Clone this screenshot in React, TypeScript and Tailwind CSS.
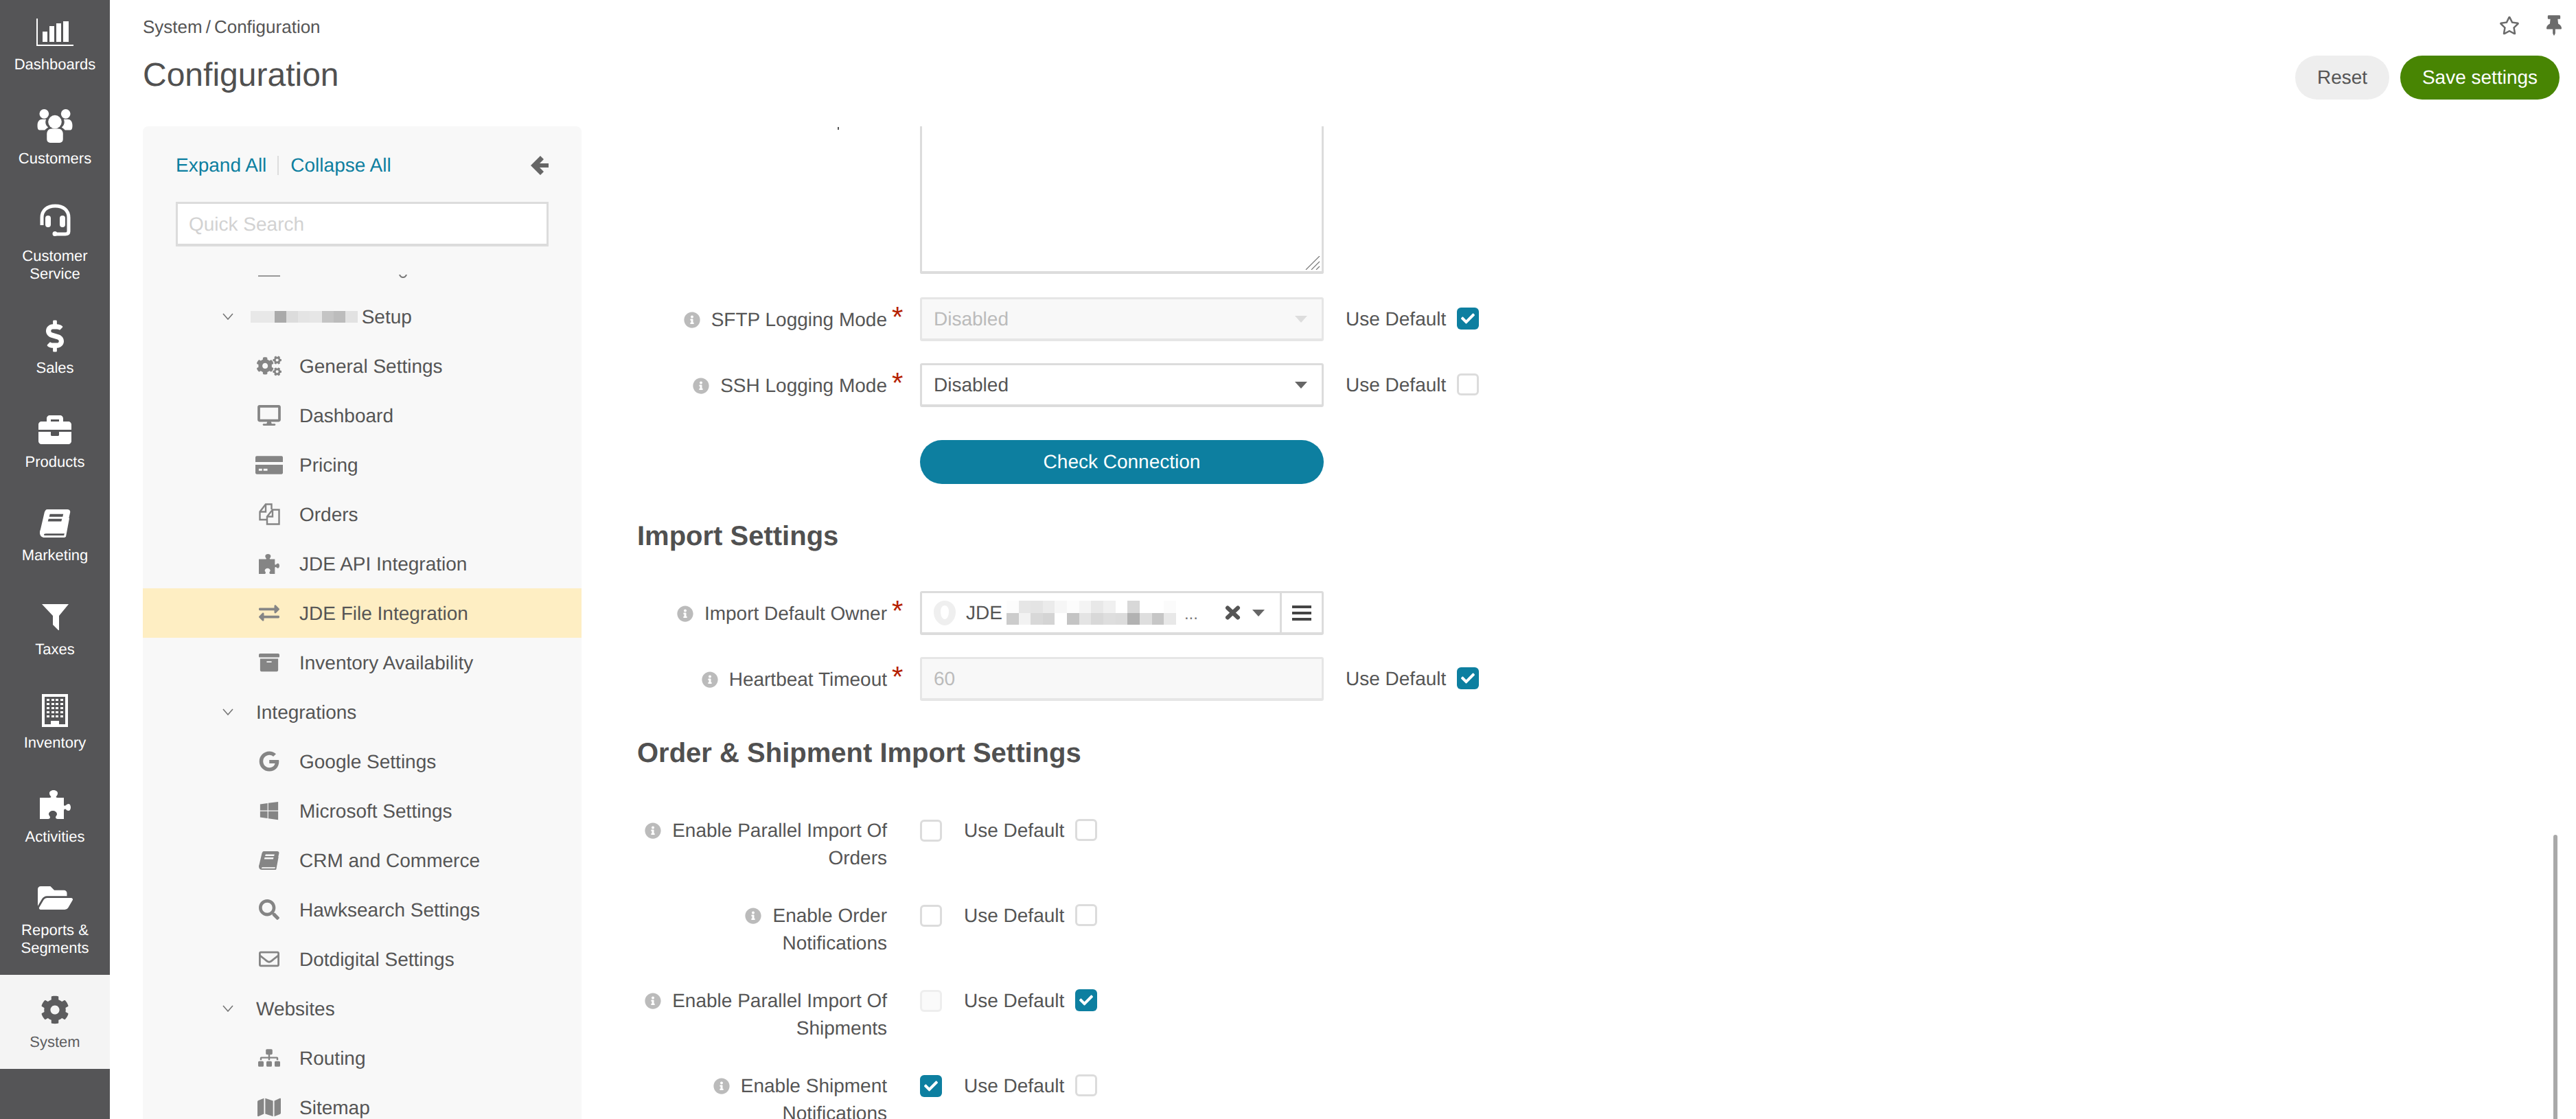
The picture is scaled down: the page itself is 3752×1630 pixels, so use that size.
import type { ReactNode } from "react";
import {
  FaArchive,
  FaBriefcase,
  FaCheck,
  FaCog,
  FaCogs,
  FaDesktop,
  FaDollarSign,
  FaExchangeAlt,
  FaFolderOpen,
  FaGoogle,
  FaInfoCircle,
  FaMap,
  FaRegEnvelope,
  FaRegStar,
  FaSearch,
  FaSitemap,
  FaThumbtack,
  FaWindows,
} from "react-icons/fa";

const font = "font-['Liberation_Sans',Arial,sans-serif] [text-rendering:geometricPrecision]";

function ChartIcon() {
  return (
    <svg viewBox="0 0 54 40" className="h-[40px] w-[54px]" fill="currentColor">
      <path d="M0 0h2v38h52v2H0z" />
      <rect x="9" y="19" width="7" height="15" />
      <rect x="19" y="11" width="7" height="23" />
      <rect x="29" y="7" width="7" height="27" />
      <rect x="39" y="4" width="8" height="30" />
    </svg>
  );
}

function UsersIcon() {
  return (
    <svg viewBox="0 0 52 50" className="h-[49px] w-[52px]" fill="currentColor">
      <circle cx="10" cy="7" r="7" />
      <circle cx="42" cy="7" r="7" />
      <path d="M0 24c0-6 3-9 7-9h6c-2 4-1 9 3 12-2 1-4 3-5 4H3c-2 0-3-2-3-7zM52 24c0-6-3-9-7-9h-6c2 4 1 9-3 12 2 1 4 3 5 4h8c2 0 3-2 3-7z" />
      <circle cx="26" cy="19" r="10" />
      <path d="M14 37c0-5 3-8 7-8h10c4 0 7 3 7 8v8c0 3-2 5-5 5H19c-3 0-5-2-5-5z" />
    </svg>
  );
}

function HeadsetIcon() {
  return (
    <svg viewBox="0 0 49 47" className="h-[47px] w-[49px]" fill="none" stroke="currentColor">
      <path d="M5 31V20C5 9 13 3 24.5 3S44 9 44 20v20c0 3-2 4-5 4H26" strokeWidth="5" />
      <rect x="10" y="17" width="8" height="17" rx="4" fill="currentColor" strokeWidth="0" />
      <rect x="31" y="17" width="8" height="17" rx="4" fill="currentColor" strokeWidth="0" />
      <circle cx="24" cy="43.5" r="3.5" fill="currentColor" strokeWidth="0" />
    </svg>
  );
}

function BookIcon({ className, cut }: { className: string; cut: string }) {
  return (
    <svg viewBox="0 0 46 42" preserveAspectRatio="none" className={className} fill="currentColor">
      <path d="M11 0h30c3 0 5 2 4 5l-6 28c-1 2-2 3-4 3H9c-2 0-3 1-3 2s1 1 3 1h27l5-27 3 1-5 27c0 1-1 2-3 2H7c-4 0-7-3-7-7 0-1 0-3 1-5L7 4c1-2 2-4 4-4z" />
      <path d="M15 7h20l-1 4H14zM13 14h20l-1 4H12z" style={{ fill: cut }} />
    </svg>
  );
}

function PuzzleIcon({ className }: { className: string }) {
  return (
    <svg viewBox="0 0 45 42" preserveAspectRatio="none" className={className} fill="currentColor">
      <path d="M0 42V11h14c2 0 3-1 2-2-2-2-2-4-2-5 0-2 3-4 6-4s6 2 6 4c0 1 0 3-2 5-1 1 0 2 2 2h9v10c0 2 1 2 3 1 1-1 2-2 4-2s3 3 3 5-1 5-3 5-3-1-4-2c-2-1-3 0-3 2v12H26c-2 0-3-1-3-3 1-2 2-3 2-4 0-3-3-5-6-5s-6 2-6 5c0 1 1 2 2 4 0 2-1 3-3 3z" />
    </svg>
  );
}

function FilterIcon() {
  return (
    <svg viewBox="0 0 39 38" className="h-[38px] w-[39px]" fill="currentColor">
      <path d="M0 0h39L25 17v21l-1 0-8-8V17z" />
    </svg>
  );
}

function BuildingIcon() {
  const dots = Array.from({ length: 20 });
  return (
    <div className="flex h-[48px] w-[38px] flex-col border-[4px] border-white px-[3px] pt-[3px]">
      <div className="grid grid-cols-4 gap-x-[2px] gap-y-[3px]">
        {dots.map((_, i) => (
          <span key={i} className="h-[3px] w-[4px] bg-white" />
        ))}
      </div>
      <div className="mt-auto flex justify-center">
        <span className="h-[5px] w-[12px] bg-white" />
      </div>
    </div>
  );
}

function CardIcon() {
  return (
    <svg viewBox="0 0 41 27" className="h-[27px] w-[41px]" fill="currentColor">
      <path d="M2 0h37c1 0 2 1 2 2v7H0V2c0-1 1-2 2-2z" />
      <path d="M0 13h41v12c0 1-1 2-2 2H2c-1 0-2-1-2-2zM5 19v3h5v-3zm7 0v3h6v-3z" fillRule="evenodd" />
    </svg>
  );
}

function FilesIcon() {
  return (
    <svg viewBox="0 0 31 32" className="h-[32px] w-[31px]" fill="none" stroke="currentColor" strokeWidth="2.4">
      <path d="M11 24H1.5V12.5L10 1.5h8.5V9" />
      <path d="M1.5 12.5H10v-11" />
      <path d="M12 19.5L20 9.500h9.500v21H12z" />
      <path d="M12 19.500h8v-10" />
    </svg>
  );
}

type NavItem = { label: ReactNode; icon: ReactNode; cls: string; gap?: string; active?: boolean };

const navItems: NavItem[] = [
  { label: "Dashboards", icon: <ChartIcon />, cls: "h-[132.5px] pt-[22px]" },
  { label: "Customers", icon: <UsersIcon />, cls: "h-[136.5px] pt-[26px]" },
  { label: <>Customer<br />Service</>, icon: <HeadsetIcon />, cls: "h-[169px] pt-[26px]", gap: "mb-[15px]" },
  { label: "Sales", icon: <FaDollarSign className="h-[47px] w-[26px]" />, cls: "h-[136.5px] pt-[26px]" },
  { label: "Products", icon: <FaBriefcase className="h-[48px] w-[48px]" />, cls: "h-[136.5px] pt-[26px]" },
  { label: "Marketing", icon: <BookIcon className="h-[41px] w-[45px]" cut="#555557" />, cls: "h-[136.5px] pt-[26px]" },
  { label: "Taxes", icon: <FilterIcon />, cls: "h-[136.5px] pt-[26px]" },
  { label: "Inventory", icon: <BuildingIcon />, cls: "h-[136.5px] pt-[26px]" },
  { label: "Activities", icon: <PuzzleIcon className="h-[42px] w-[45px]" />, cls: "h-[136.5px] pt-[26px]" },
  { label: <>Reports &amp;<br />Segments</>, icon: <FaFolderOpen className="h-[46px] w-[51px]" />, cls: "h-[163px] pt-[26px]" },
  { label: "System", icon: <FaCog className="h-[42px] w-[42px]" />, cls: "h-[137px] pt-[26px]", active: true },
];

function Sidebar() {
  return (
    <nav className="h-full w-[160px] shrink-0 bg-[#555557] text-white">
      {navItems.map((item, i) => (
        <div
          key={i}
          className={`flex flex-col items-center text-center text-[22px] leading-[26px] ${item.cls} ${
            item.active ? "bg-[#f4f4f4] text-[#5c5c5e]" : ""
          }`}
        >
          <div className={`flex h-[50px] items-center justify-center ${item.gap ?? "mb-[9px]"}`}>{item.icon}</div>
          <div>{item.label}</div>
        </div>
      ))}
    </nav>
  );
}

const iconCls = "h-[30px] w-[32px]";

type TreeRow =
  | { kind: "group"; label: string }
  | { kind: "item"; label: string; icon: ReactNode; active?: boolean };

const treeRows: TreeRow[] = [
  { kind: "item", label: "General Settings", icon: <FaCogs className="h-[32px] w-[36px]" /> },
  { kind: "item", label: "Dashboard", icon: <FaDesktop className="h-[30px] w-[34px]" /> },
  { kind: "item", label: "Pricing", icon: <CardIcon /> },
  { kind: "item", label: "Orders", icon: <FilesIcon /> },
  { kind: "item", label: "JDE API Integration", icon: <PuzzleIcon className="h-[29px] w-[30px]" /> },
  { kind: "item", label: "JDE File Integration", icon: <FaExchangeAlt className={iconCls} />, active: true },
  { kind: "item", label: "Inventory Availability", icon: <FaArchive className={iconCls} /> },
  { kind: "group", label: "Integrations" },
  { kind: "item", label: "Google Settings", icon: <FaGoogle className={iconCls} /> },
  { kind: "item", label: "Microsoft Settings", icon: <FaWindows className={iconCls} /> },
  { kind: "item", label: "CRM and Commerce", icon: <BookIcon className="h-[27px] w-[30px]" cut="#f8f8f8" /> },
  { kind: "item", label: "Hawksearch Settings", icon: <FaSearch className={iconCls} /> },
  { kind: "item", label: "Dotdigital Settings", icon: <FaRegEnvelope className="h-[30px] w-[34px]" /> },
  { kind: "group", label: "Websites" },
  { kind: "item", label: "Routing", icon: <FaSitemap className={iconCls} /> },
  { kind: "item", label: "Sitemap", icon: <FaMap className="h-[32px] w-[34px]" /> },
];

function Chevron() {
  return (
    <svg viewBox="0 0 16 10" className="h-[10px] w-[16px]" fill="none" stroke="#777" strokeWidth="1.6">
      <path d="M1 1l7 8 7-8" />
    </svg>
  );
}

function Blocks({ colors, size, rowH }: { colors: string[][]; size: number; rowH: number }) {
  return (
    <div className="flex flex-col">
      {colors.map((row, r) => (
        <div key={r} className="flex">
          {row.map((c, i) => (
            <span key={i} style={{ width: size, height: rowH, backgroundColor: c }} />
          ))}
        </div>
      ))}
    </div>
  );
}

function Tree() {
  return (
    <div className="mt-[38px] min-h-0 flex-1 overflow-hidden">
      <div className="relative h-[28px]">
        <span className="absolute left-[168px] top-[4px] h-[2px] w-[32px] bg-[#999]" />
        <svg viewBox="0 0 12 5" className="absolute left-[373px] top-[3px] h-[5px] w-[12px]" fill="none" stroke="#777" strokeWidth="2">
          <path d="M1 0c1 3 3 4 5 4s4-1 5-4" />
        </svg>
      </div>
      <div className="flex h-[72px] items-center pl-[116px] text-[#555]">
        <span className="w-[41px]">
          <Chevron />
        </span>
        <Blocks
          size={17.3}
          rowH={17}
          colors={[["#e8e8e8", "#e8e8e8", "#aaaaaa", "#dcdcdc", "#e4e4e4", "#e6e6e6", "#c4c4c4", "#bcbcbc", "#e2e2e2"]]}
        />
        <span className="ml-[6px] mt-[1px]">Setup</span>
      </div>
      {treeRows.map((row) =>
        row.kind === "group" ? (
          <div key={row.label} className="flex h-[72px] items-center pl-[116px] text-[#555]">
            <span className="w-[49px]">
              <Chevron />
            </span>
            <span className="mt-[1px]">{row.label}</span>
          </div>
        ) : (
          <div
            key={row.label}
            className={`flex h-[72px] items-center pl-[164px] text-[#555] ${row.active ? "bg-[#feeec3]" : ""}`}
          >
            <span className="flex w-[64px] justify-center pr-[24px] text-[#858585]">{row.icon}</span>
            <span className="mt-[1px]">{row.label}</span>
          </div>
        ),
      )}
    </div>
  );
}

function LeftPanel() {
  return (
    <aside className="ml-[48px] flex w-[639px] shrink-0 flex-col rounded-t-[8px] bg-[#f8f8f8] text-[28px]">
      <div className="flex items-center justify-between pl-[48px] pr-[48px] pt-[36px]">
        <div className="flex items-center text-[#0d7fa0]">
          <span>Expand All</span>
          <span className="ml-[16px] mr-[17px] h-[28px] w-[2px] bg-[#ddd]" />
          <span>Collapse All</span>
        </div>
        <svg viewBox="0 0 26 28" className="h-[28px] w-[26px]" fill="#666">
          <path d="M14 0L0 14l14 14 5-5-6-6h13v-6H13l6-6z" />
        </svg>
      </div>
      <div className="mx-[48px] mt-[32px] flex h-[65px] items-center border-[3px] border-b-[4px] border-[#dcdcdc] bg-white px-[16px] pt-[2px] text-[#d2d2d2]">
        Quick Search
      </div>
      <Tree />
    </aside>
  );
}

function Label({ text, required }: { text: string; required?: boolean }) {
  return (
    <div className="flex w-[412px] shrink-0">
      <div className={`w-[364px] text-right leading-[40px] text-[#555] ${required ? "mt-[1px]" : ""}`}>
        <FaInfoCircle className="mr-[16px] inline-block h-[24px] w-[24px] align-[-3px] text-[#bbb]" />
        {text}
      </div>
      {required && <span className="ml-[7px] mt-[-6px] h-0 text-[42px] leading-[46px] text-[#b51f00]">*</span>}
    </div>
  );
}

function Box({ checked, disabled }: { checked?: boolean; disabled?: boolean }) {
  if (checked) {
    return (
      <span className="flex h-[32px] w-[32px] shrink-0 items-center justify-center rounded-[6px] bg-[#0d7fa0] text-white">
        <FaCheck className="h-[20px] w-[22px]" />
      </span>
    );
  }
  return (
    <span
      className={`block h-[32px] w-[32px] shrink-0 rounded-[6px] border-[3px] ${
        disabled ? "border-[#eee] bg-[#fafafa]" : "border-[#dcdcdc] bg-white"
      }`}
    />
  );
}

function UseDefault({ checked }: { checked?: boolean }) {
  return (
    <div className="flex h-[32px] items-center">
      <span className="text-[#555]">Use Default</span>
      <span className="ml-[16px] mt-[-2px] block">
        <Box checked={checked} />
      </span>
    </div>
  );
}

function Caret({ color }: { color: string }) {
  return (
    <svg viewBox="0 0 18 10" className="h-[10px] w-[18px]" style={{ fill: color }}>
      <path d="M0 0h18L9 10z" />
    </svg>
  );
}

function FieldRow({
  label,
  children,
  useDefault,
}: {
  label: string;
  children: ReactNode;
  useDefault: boolean;
}) {
  return (
    <div className="flex h-[64px] items-center">
      <Label text={label} required />
      {children}
      <div className="ml-[32px]">
        <UseDefault checked={useDefault} />
      </div>
    </div>
  );
}

function CheckRow({
  label,
  checked,
  disabled,
  useDefault,
}: {
  label: string;
  checked?: boolean;
  disabled?: boolean;
  useDefault?: boolean;
}) {
  return (
    <div className="mb-[44px] flex h-[80px] shrink-0 items-start">
      <div className="mt-[-4px]">
        <Label text={label} />
      </div>
      <div className="flex items-center">
        <Box checked={checked} disabled={disabled} />
        <span className="ml-[32px] block">
          <UseDefault checked={useDefault} />
        </span>
      </div>
    </div>
  );
}

function Form() {
  return (
    <div className="relative ml-[81px] min-w-0 flex-1 overflow-hidden text-[28px]">
      <span className="absolute left-[292px] top-[1px] h-[4px] w-[2px] bg-[#555]" />
      <div className="ml-[412px] flex h-[215px] w-[588px] items-end justify-end rounded-b-[3px] border-x-[3px] border-b-[4px] border-[#dcdcdc] pb-[2px] pr-[2px]">
        <svg viewBox="0 0 22 20" className="h-[20px] w-[22px]" stroke="#777" strokeWidth="1.2">
          <path d="M1 20L21 0M9 20L21 8M16 20l5-5" />
        </svg>
      </div>

      <div className="mt-[34px]">
        <FieldRow label="SFTP Logging Mode" useDefault>
          <div className="flex h-[64px] w-[588px] items-center justify-between rounded-[3px] border-[3px] border-b-[4px] border-[#e6e6e6] bg-[#f8f8f8] pl-[17px] pr-[21px] text-[#bbb]">
            <span className="mt-[1px]">Disabled</span>
            <Caret color="#ddd" />
          </div>
        </FieldRow>
      </div>
      <div className="mt-[32px]">
        <FieldRow label="SSH Logging Mode" useDefault={false}>
          <div className="flex h-[64px] w-[588px] items-center justify-between rounded-[3px] border-[3px] border-b-[4px] border-[#dcdcdc] bg-white pl-[17px] pr-[21px] text-[#555]">
            <span className="mt-[1px]">Disabled</span>
            <Caret color="#666" />
          </div>
        </FieldRow>
      </div>
      <div className="ml-[412px] mt-[48px] flex h-[64px] w-[588px] items-center justify-center rounded-full bg-[#0d7fa0] text-white">
        Check Connection
      </div>

      <h2 className="mt-[52px] text-[40px] font-bold leading-[48px] text-[#505050]">Import Settings</h2>
      <div className="mt-[56px] flex h-[64px] items-center">
        <Label text="Import Default Owner" required />
        <div className="flex h-[64px] w-[588px] items-stretch rounded-[3px] border-[3px] border-b-[4px] border-[#dcdcdc] bg-white text-[#555]">
          <div className="flex min-w-0 flex-1 items-center pl-[17px]">
            <svg viewBox="0 0 32 36" className="h-[36px] w-[32px]" fill="#efefef">
              <path d="M16 0c9 0 16 7 16 16 0 8-3 13-8 17-2 2-5 3-8 3s-6-1-8-3C3 29 0 24 0 16 0 7 7 0 16 0zm0 7c-4 0-6 4-6 9s2 11 6 11 6-6 6-11-2-9-6-9z" />
            </svg>
            <span className="ml-[15px]">JDE</span>
            <span className="ml-[6px]">
              <Blocks
                size={17.65}
                rowH={17.5}
                colors={[
                  ["#fcfcfc", "#e6e6e6", "#e4e4e4", "#ebebeb", "#f6f6f6", "#fcfcfc", "#f4f4f4", "#e8e8e8", "#f0f0f0", "#ffffff", "#d8d8d8", "#ffffff", "#ffffff", "#fbfbfb"],
                  ["#cccccc", "#f2f2f2", "#d8d8d8", "#d4d4d4", "#ffffff", "#c4c4c4", "#e4e4e4", "#d8d8d8", "#dedede", "#dcdcdc", "#b2b2b2", "#dedede", "#c6c6c6", "#e8e8e8"],
                ]}
              />
            </span>
            <span className="ml-[12px] mt-[4px] text-[24px] text-[#777]">...</span>
            <svg viewBox="0 0 23 21" className="ml-[39px] h-[21px] w-[23px]" stroke="#555" strokeWidth="6" strokeLinecap="round">
              <path d="M4 3.5l15 14M19 3.5l-15 14" />
            </svg>
            <span className="ml-[17px]">
              <Caret color="#666" />
            </span>
          </div>
          <div className="flex w-[61px] shrink-0 items-center justify-center border-l-[3px] border-[#dcdcdc]">
            <div className="flex w-[28px] flex-col gap-[5px]">
              <span className="h-[4px] bg-[#444]" />
              <span className="h-[4px] bg-[#444]" />
              <span className="h-[4px] bg-[#444]" />
            </div>
          </div>
        </div>
      </div>
      <div className="mt-[32px]">
        <FieldRow label="Heartbeat Timeout" useDefault>
          <div className="flex h-[64px] w-[588px] items-center rounded-[3px] border-[3px] border-b-[4px] border-[#e6e6e6] bg-[#f8f8f8] pl-[17px] text-[#bbb]">
            <span className="mt-[1px]">60</span>
          </div>
        </FieldRow>
      </div>

      <h2 className="mt-[52px] mb-[-1px] text-[40px] font-bold leading-[48px] text-[#505050]">
        Order &amp; Shipment Import Settings
      </h2>
      <div className="mt-[74px]">
        <CheckRow label="Enable Parallel Import Of Orders" />
        <CheckRow label="Enable Order Notifications" />
        <CheckRow label="Enable Parallel Import Of Shipments" disabled useDefault />
        <CheckRow label="Enable Shipment Notifications" checked />
      </div>
    </div>
  );
}

export default function App() {
  return (
    <div className={`relative flex h-screen w-full overflow-hidden bg-white ${font}`}>
      <Sidebar />
      <main className="flex min-w-0 flex-1 flex-col">
        <header className="h-[184px] shrink-0 pl-[48px] pr-[24px] text-[#555]">
          <div className="flex h-[81px] items-start justify-between pt-[22px]">
            <div className="text-[26px] leading-[34px]">
              System<span className="mx-[5px]">/</span>Configuration
            </div>
            <div className="flex items-center text-[#6b6b6b]">
              <FaRegStar className="h-[30px] w-[30px]" />
              <FaThumbtack className="ml-[39px] mr-[-3px] h-[30px] w-[22px]" />
            </div>
          </div>
          <div className="flex items-start justify-between">
            <h1 className="mt-[1px] text-[48px] leading-[56px] text-[#505050]">Configuration</h1>
            <div className="flex gap-[16px] text-[28px]">
              <div className="flex h-[64px] w-[137px] items-center justify-center rounded-full bg-[#eeeeee]">Reset</div>
              <div className="flex h-[64px] w-[232px] items-center justify-center rounded-full bg-[#488503] text-white">
                Save settings
              </div>
            </div>
          </div>
        </header>
        <div className="flex min-h-0 flex-1">
          <LeftPanel />
          <Form />
        </div>
      </main>
      <span className="absolute left-[3719px] top-[1216px] h-[414px] w-[6px] rounded-t-[3px] bg-[#a9a9a9]" />
    </div>
  );
}
